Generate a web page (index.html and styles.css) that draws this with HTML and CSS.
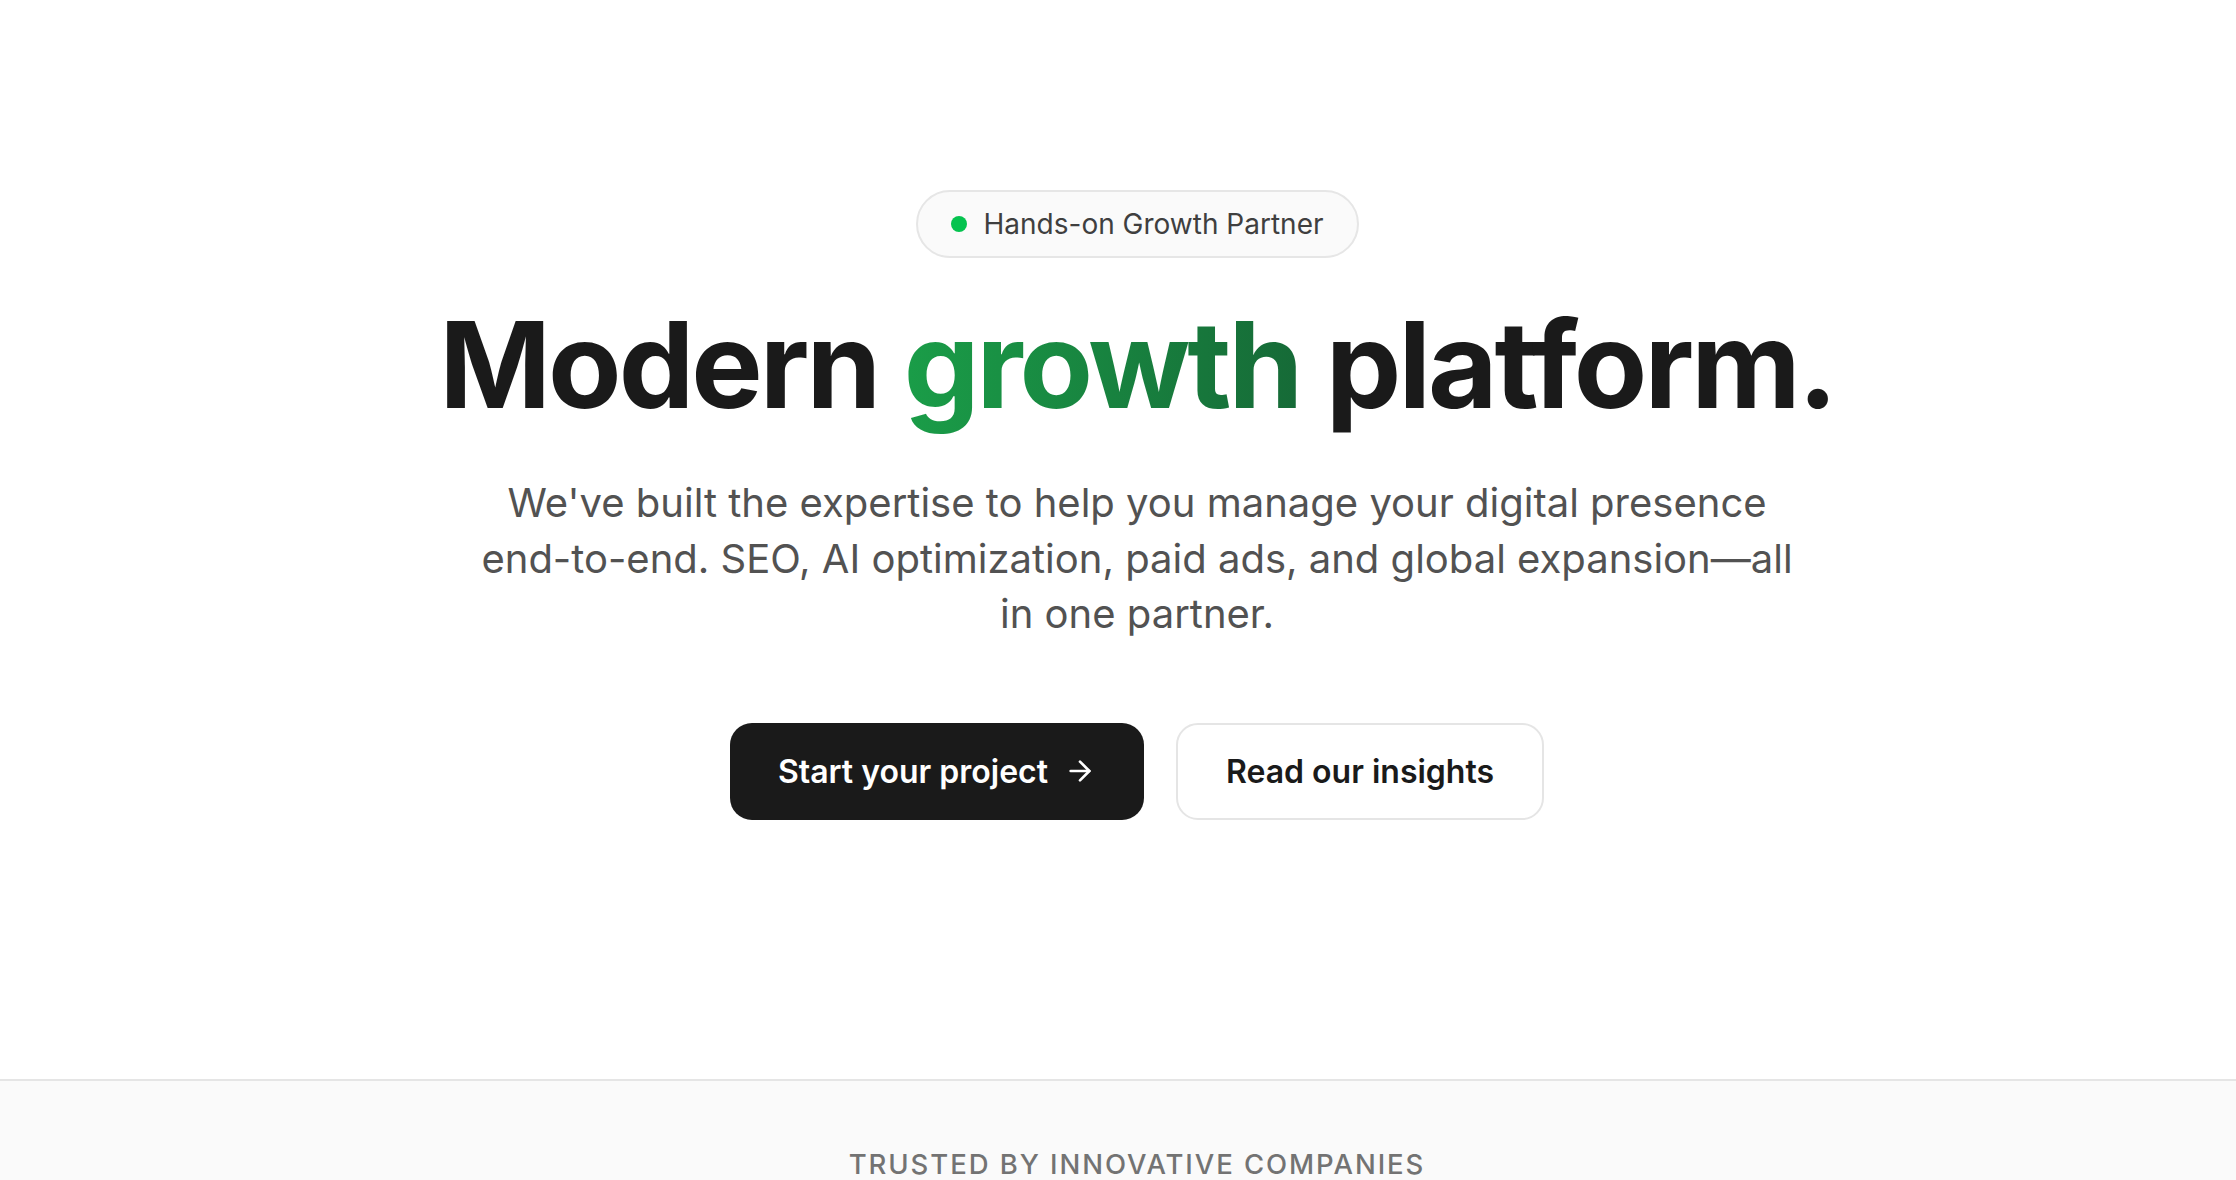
FILE: index.html
```html
<!DOCTYPE html>
<html lang="en">
<head>
<meta charset="utf-8">
<title>Modern growth platform</title>
<link rel="stylesheet" href="styles.css">
</head>
<body>
<section class="hero">
  <div class="badge"><span class="badge-dot"></span><span>Hands-on Growth Partner</span></div>
  <h1 class="title">Modern <span class="accent">growth</span> platform.</h1>
  <p class="lead">We've built the expertise to help you manage your digital presence end-to-end. SEO, AI optimization, paid ads, and global expansion—all in one partner.</p>
  <div class="actions">
    <a class="btn btn-primary" href="#">Start your project
      <svg class="btn-icon" viewBox="0 0 24 24" fill="none" stroke="currentColor" stroke-width="2" stroke-linecap="round" stroke-linejoin="round"><path d="M5 12h14"/><path d="M12 5l7 7-7 7"/></svg>
    </a>
    <a class="btn btn-secondary" href="#">Read our insights</a>
  </div>
</section>
<section class="trusted">
  <p class="trusted-label">TRUSTED BY INNOVATIVE COMPANIES</p>
</section>
</body>
</html>
```

FILE: styles.css
```css
* { box-sizing: border-box; }
html, body { margin: 0; padding: 0; }
body {
  font-family: Inter, "Noto Sans", sans-serif;
  background: #ffffff;
  color: #1a1a1a;
}
.hero {
  display: flex;
  flex-direction: column;
  align-items: center;
  padding: 190px 0 259px 38px;
  text-align: center;
}
.badge {
  display: inline-flex;
  align-items: center;
  gap: 17px;
  height: 68px;
  padding: 0 33px;
  border: 2px solid #e6e6e6;
  border-radius: 999px;
  background: #fafafa;
  font-size: 28px;
  color: #3f3f3f;
}
.badge-dot {
  width: 16px;
  height: 16px;
  border-radius: 50%;
  background: #05c34f;
}
.title {
  margin: 41px 0 0;
  font-size: 120px;
  font-weight: 700;
  line-height: 1.1;
  letter-spacing: -0.025em;
  color: #1a1a1a;
}
.accent {
  background: linear-gradient(90deg, #1a9d48 0%, #166a37 100%);
  -webkit-background-clip: text;
  background-clip: text;
  color: transparent;
}
.lead {
  margin: 44px 0 0;
  max-width: 1340px;
  font-size: 40px;
  line-height: 1.39;
  color: #525252;
}
.actions {
  display: flex;
  gap: 32px;
  margin-top: 81px;
}
.btn {
  display: inline-flex;
  align-items: center;
  justify-content: center;
  gap: 16px;
  height: 97px;
  padding: 0 48px;
  border-radius: 22px;
  font-size: 32px;
  font-weight: 600;
  text-decoration: none;
}
.btn-primary {
  background: #1a1a1a;
  color: #ffffff;
}
.btn-icon {
  width: 32px;
  height: 32px;
}
.btn-secondary {
  background: #ffffff;
  color: #1a1a1a;
  border: 2px solid #e5e5e5;
}
.trusted {
  border-top: 2px solid #e5e5e5;
  background: #fafafa;
  padding: 66px 0 40px 38px;
  text-align: center;
}
.trusted-label {
  margin: 0;
  font-size: 27.5px;
  font-weight: 500;
  letter-spacing: 0.07em;
  color: #737373;
}
```
